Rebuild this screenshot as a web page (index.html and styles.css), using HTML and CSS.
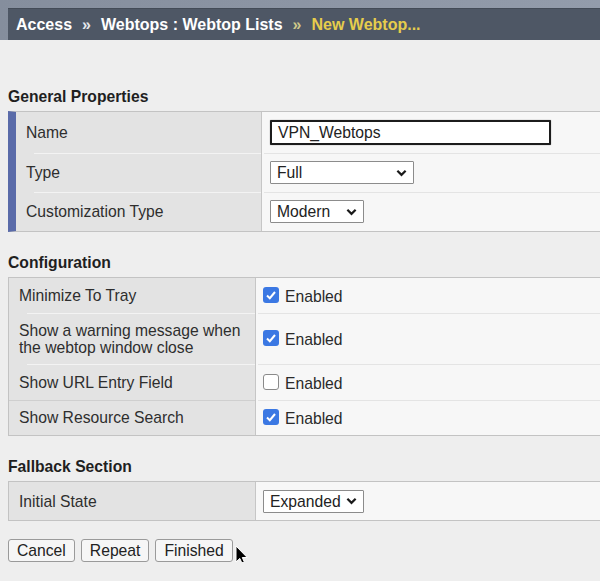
FILE: index.html
```html
<!DOCTYPE html>
<html>
<head>
<meta charset="UTF-8">
<title>New Webtop</title>
<link rel="stylesheet" href="styles.css">
</head>
<body>
	<div class="header">
		<div class="crumbs">
			<span>Access</span><span class="sep">&raquo;</span><span>Webtops : Webtop Lists</span><span class="sep current">&raquo;</span><span class="current">New Webtop...</span>
		</div>
	</div>

	<div class="content">
		<h2 class="sectionTitle first">General Properties</h2>
		<table class="props general">
			<tr class="row41">
				<td class="label">Name</td>
				<td class="value"><div class="textField">VPN_Webtops</div></td>
			</tr>
			<tr class="row39">
				<td class="label sepLine">Type</td>
				<td class="value sepLine"><div class="selectBox typeSelect"><span>Full</span><svg class="chevron" viewBox="0 0 12 8"><path d="M1.5 1.5 L6 6 L10.5 1.5"/></svg></div></td>
			</tr>
			<tr class="row39">
				<td class="label sepLine">Customization Type</td>
				<td class="value sepLine"><div class="selectBox modernSelect"><span>Modern</span><svg class="chevron" viewBox="0 0 12 8"><path d="M1.5 1.5 L6 6 L10.5 1.5"/></svg></div></td>
			</tr>
		</table>

		<h2 class="sectionTitle">Configuration</h2>
		<table class="props">
			<tr class="row35">
				<td class="label">Minimize To Tray</td>
				<td class="value"><div class="option"><span class="check on"><svg viewBox="0 0 16 16"><path d="M4 8.5 L6.8 11.2 L12 5"/></svg></span>Enabled</div></td>
			</tr>
			<tr class="row51">
				<td class="label sepLine">Show a warning message when<br>the webtop window close</td>
				<td class="value sepLine"><div class="option"><span class="check on"><svg viewBox="0 0 16 16"><path d="M4 8.5 L6.8 11.2 L12 5"/></svg></span>Enabled</div></td>
			</tr>
			<tr class="row36">
				<td class="label sepLine">Show URL Entry Field</td>
				<td class="value sepLine"><div class="option"><span class="check"></span>Enabled</div></td>
			</tr>
			<tr class="row35">
				<td class="label sepFull">Show Resource Search</td>
				<td class="value sepLine"><div class="option"><span class="check on"><svg viewBox="0 0 16 16"><path d="M4 8.5 L6.8 11.2 L12 5"/></svg></span>Enabled</div></td>
			</tr>
		</table>

		<h2 class="sectionTitle">Fallback Section</h2>
		<table class="props">
			<tr class="row38">
				<td class="label">Initial State</td>
				<td class="value"><div class="selectBox expandSelect"><span>Expanded</span><svg class="chevron" viewBox="0 0 12 8"><path d="M1.5 1.5 L6 6 L10.5 1.5"/></svg></div></td>
			</tr>
		</table>

		<div class="buttons">
			<button class="btn">Cancel</button>
			<button class="btn">Repeat</button>
			<button class="btn">Finished</button>
			<svg class="cursor" viewBox="0 0 13 21"><path d="M1 1 L1 17 L4.8 13.4 L7.6 19.6 L10 18.6 L7.3 12.5 L12.2 12.5 Z"/></svg>
		</div>
	</div>
</body>
</html>
```

FILE: styles.css
```css
*{
	box-sizing: border-box;
}
body{
	margin: 0;
	background: #eeeeee;
	color: #2b2b2b;
	font-family: "Liberation Sans", Arial, sans-serif;
	font-size: 15.7px;
	overflow: hidden;
}
.header{
	background: linear-gradient(90deg, #858e9d, #939cab);
	padding: 8px 0 0 8px;
}
.crumbs{
	background: #4e5765;
	border-top: 1px solid #434b57;
	height: 32px;
	line-height: 31px;
	padding-left: 8px;
	color: #ffffff;
	font-size: 16px;
	font-weight: bold;
	white-space: nowrap;
}
.sep{
	margin: 0 10px;
	color: #e6e8ec;
}
.crumbs .current{
	color: #e6cd4c;
}
.crumbs .sep.current{
	color: #cfc98a;
}
.content{
	padding-left: 8px;
	position: relative;
}
.sectionTitle{
	margin: 22px 0 5px 0;
	font-size: 15.7px;
	line-height: 18px;
	font-weight: bold;
	color: #1f1f1f;
}
.sectionTitle.first{
	margin-top: 48px;
}
.props{
	width: 100%;
	border-spacing: 0;
	border-top: 1px solid #c3c3c3;
	border-bottom: 1px solid #c3c3c3;
	border-left: 1px solid #c3c3c3;
}
.props.general{
	border-left: 8px solid #5a6ba9;
}
.props td{
	padding: 0;
	vertical-align: middle;
	line-height: 17px;
}
.row41{ height: 41px; }
.row39{ height: 39px; }
.row38{ height: 38px; }
.row36{ height: 36px; }
.row35{ height: 35px; }
.row51{ height: 51px; }

.label{
	width: 247px;
	background-color: #e3e3e3;
	border-right: 1px solid #c6c6c6;
	padding-left: 10px !important;
	color: #2e2e2e;
}
.general .label{
	width: 246px;
}
.value{
	background-color: #f7f7f7;
	padding-left: 7px !important;
}
.general .value{
	padding-left: 8px !important;
}
.label.sepLine{
	background: linear-gradient(#f3f3f3, #f3f3f3) 18px 0 / 100% 1px no-repeat, #e3e3e3;
}
.label.sepFull{
	background: linear-gradient(#cfcfcf, #cfcfcf) 0 0 / 100% 1px no-repeat, #e3e3e3;
}
.value.sepLine{
	background: linear-gradient(#e4e4e4, #e4e4e4) 2px 0 / 100% 1px no-repeat, #f7f7f7;
}

.textField{
	width: 281px;
	height: 25px;
	border: 2px solid #1c1c1c;
	border-radius: 1px;
	background: #ffffff;
	padding-left: 6px;
	line-height: 21px;
	color: #222222;
	box-shadow: 0 0 1px #555555;
}
.selectBox{
	display: flex;
	align-items: center;
	justify-content: space-between;
	height: 23px;
	border: 1px solid #8c8c8c;
	border-radius: 1px;
	background: #ffffff;
	padding: 0 6px 0 6px;
	color: #222222;
}
.typeSelect{ width: 144px; }
.modernSelect{ width: 94px; }
.expandSelect{ width: 101px; }
.chevron{
	width: 11px;
	height: 8px;
	fill: none;
	stroke: #1a1a1a;
	stroke-width: 2.4;
}

.option{
	display: flex;
	align-items: center;
	color: #2a2a2a;
	padding-top: 2px;
}
.check{
	width: 16px;
	height: 16px;
	margin-right: 6px;
	margin-bottom: 3px;
	border: 1px solid #8a8a8a;
	border-radius: 3px;
	background: #ffffff;
}
.check.on{
	border: none;
	background: #3b78e3;
}
.check svg{
	display: block;
	width: 16px;
	height: 16px;
	fill: none;
	stroke: #ffffff;
	stroke-width: 2;
}

.buttons{
	display: flex;
	gap: 6px;
	margin-top: 18px;
	position: relative;
}
.btn{
	height: 23px;
	padding: 0 8px;
	border: 1px solid #9a9a9a;
	border-radius: 3px;
	background: #f6f6f6;
	font-family: "Liberation Sans", Arial, sans-serif;
	font-size: 15.7px;
	color: #222222;
	line-height: 21px;
}
.cursor{
	position: absolute;
	left: 227px;
	top: 6px;
	width: 13px;
	height: 21px;
	fill: #000000;
	stroke: #ffffff;
	stroke-width: 1;
}
```
